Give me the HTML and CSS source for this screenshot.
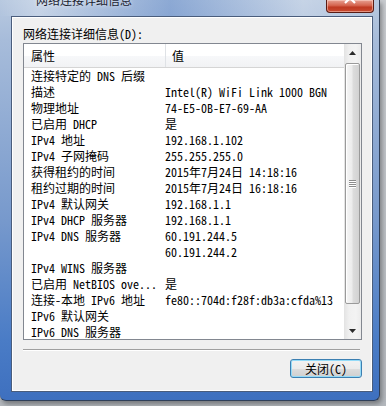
FILE: index.html
```html
<!DOCTYPE html>
<html lang="zh-CN">
<head>
<meta charset="utf-8">
<title>网络连接详细信息</title>
<link rel="stylesheet" href="styles.css">
</head>
<body>
<div class="window">
  <div class="titlebar">
    <span class="title">网络连接详细信息</span>
    <span class="close"><svg width="12" height="10" viewBox="0 0 12 10"><path d="M1 -4 L6 1 L11 -4 M1 6 L6 1 L11 6" stroke="#fff" stroke-width="2.2" fill="none"/></svg></span>
  </div>
  <div class="client">
    <div class="label">网络连接详细信息(<u>D</u>):</div>
    <div class="list">
      <div class="data">
        <div class="header">
          <div class="hcell h1">属性</div>
          <div class="hcell h2">值</div>
        </div>
        <div class="rows">
          <div class="row"><span class="k">连接特定的 DNS 后缀</span><span class="v"></span></div>
          <div class="row"><span class="k">描述</span><span class="v">Intel(R) WiFi Link 1000 BGN</span></div>
          <div class="row"><span class="k">物理地址</span><span class="v">74-E5-0B-E7-69-AA</span></div>
          <div class="row"><span class="k">已启用 DHCP</span><span class="v">是</span></div>
          <div class="row"><span class="k">IPv4 地址</span><span class="v">192.168.1.102</span></div>
          <div class="row"><span class="k">IPv4 子网掩码</span><span class="v">255.255.255.0</span></div>
          <div class="row"><span class="k">获得租约的时间</span><span class="v">2015年7月24日 14:18:16</span></div>
          <div class="row"><span class="k">租约过期的时间</span><span class="v">2015年7月24日 16:18:16</span></div>
          <div class="row"><span class="k">IPv4 默认网关</span><span class="v">192.168.1.1</span></div>
          <div class="row"><span class="k">IPv4 DHCP 服务器</span><span class="v">192.168.1.1</span></div>
          <div class="row"><span class="k">IPv4 DNS 服务器</span><span class="v">60.191.244.5</span></div>
          <div class="row"><span class="k"></span><span class="v">60.191.244.2</span></div>
          <div class="row"><span class="k">IPv4 WINS 服务器</span><span class="v"></span></div>
          <div class="row"><span class="k">已启用 NetBIOS ove...</span><span class="v">是</span></div>
          <div class="row"><span class="k">连接-本地 IPv6 地址</span><span class="v">fe80::704d:f28f:db3a:cfda%13</span></div>
          <div class="row"><span class="k">IPv6 默认网关</span><span class="v"></span></div>
          <div class="row"><span class="k">IPv6 DNS 服务器</span><span class="v"></span></div>
        </div>
      </div>
      <div class="scrollbar">
        <div class="sbtn"><svg width="7" height="4" viewBox="0 0 7 4"><path d="M0 4 L3.5 0 L7 4 Z" fill="#2b2b2b"/></svg></div>
        <div class="track">
          <div class="thumb">
            <span class="grip"></span><span class="grip"></span><span class="grip"></span><span class="grip"></span>
          </div>
        </div>
        <div class="sbtn"><svg width="7" height="4" viewBox="0 0 7 4"><path d="M0 0 L7 0 L3.5 4 Z" fill="#2b2b2b"/></svg></div>
      </div>
    </div>
    <div class="sep"></div>
    <div class="footer">
      <button class="btn">关闭(<u>C</u>)</button>
    </div>
  </div>
</div>
</body>
</html>
```
FILE: styles.css
```css
html, body {
  margin: 0;
  padding: 0;
}
body {
  width: 386px;
  height: 406px;
  overflow: hidden;
  background: linear-gradient(180deg, #c9ccd0 0%, #b4b8bd 100%);
  font-family: "Noto Sans Mono CJK SC", "Noto Sans CJK SC", "Liberation Mono", monospace;
  font-size: 12px;
  color: #000;
}
u { text-decoration: none; }

.window {
  width: 380px;
  height: 401px;
  box-sizing: border-box;
  padding: 0 7px 8px 11px;
  border: 1px solid #2f3f58;
  border-top: none;
  border-left: none;
  border-radius: 0 0 6px 6px;
  background:
    linear-gradient(90deg, rgba(255,255,255,0.0) 0%, rgba(255,255,255,0.25) 10%, rgba(60,110,190,0.35) 45%, rgba(255,255,255,0.2) 80%, rgba(255,255,255,0) 100%) top / 100% 16px no-repeat,
    linear-gradient(180deg, #b8c9e0 0%, #a7bcda 10%, #7799cc 55%, #4a7cc6 85%, #3e70bf 100%);
  box-shadow: 2px 3px 5px rgba(0,0,0,0.35);
  display: flex;
  flex-direction: column;
}

.titlebar {
  height: 16px;
  display: flex;
  align-items: flex-start;
  margin-left: -11px;
  margin-right: -7px;
  overflow: hidden;
}
.title {
  margin: -6px 0 0 36px;
  line-height: 12px;
  color: #1a2230;
  text-shadow: 0 0 4px rgba(255,255,255,0.8);
}
.close {
  margin-left: auto;
  margin-right: 5px;
  width: 48px;
  height: 13px;
  box-sizing: border-box;
  border: 1px solid #5a1c14;
  border-top: none;
  border-radius: 0 0 4px 4px;
  background: linear-gradient(180deg, #e7a293 0%, #d5654f 45%, #bf3a22 60%, #c94a30 100%);
  box-shadow: inset 0 0 0 1px rgba(255,220,210,0.5);
  display: flex;
  justify-content: center;
  align-items: flex-start;
}
.close svg { display: block; margin-top: -3px; }

.client {
  width: 362px;
  height: 376px;
  box-sizing: border-box;
  border: 1px solid #4a5d7c;
  box-shadow: inset 1px 1px 0 #ffffff, inset -1px -1px 0 #ffffff;
  background: #f0f0f0;
  padding: 9px 10px 0 11px;
  display: flex;
  flex-direction: column;
}

.label {
  height: 16px;
  line-height: 16px;
  white-space: nowrap;
}

.list {
  margin-top: 1px;
  width: 339px;
  height: 297px;
  box-sizing: border-box;
  border: 1px solid #828790;
  background: #fff;
  display: flex;
}

.data {
  flex: 1;
  height: 295px;
  overflow: hidden;
  display: flex;
  flex-direction: column;
}
.header {
  height: 24px;
  flex: none;
  box-sizing: border-box;
  display: flex;
  background: linear-gradient(180deg, #ffffff 0%, #ffffff 50%, #f7f8fa 51%, #f1f2f4 100%);
  border-bottom: 1px solid #d5d5d5;
}
.hcell {
  line-height: 23px;
  white-space: nowrap;
}
.h1 {
  width: 134px;
  padding-left: 7px;
  border-right: 1px solid #dfe2e6;
}
.h2 {
  padding-left: 6px;
}

.rows {
  display: flex;
  flex-direction: column;
}
.row {
  height: 16px;
  flex: none;
  display: grid;
  grid-template-columns: 141px 1fr;
  line-height: 16px;
  white-space: nowrap;
}
.k {
  padding-left: 7px;
  overflow: hidden;
}
.v {
  overflow: hidden;
}

.scrollbar {
  width: 17px;
  height: 295px;
  flex: none;
  display: flex;
  flex-direction: column;
  background: linear-gradient(90deg, #e3e3e3 0%, #f0f0f0 30%, #f3f3f3 70%, #ebebeb 100%);
}
.sbtn {
  height: 17px;
  flex: none;
  display: flex;
  align-items: center;
  justify-content: center;
}
.sbtn svg { display: block; }
.track {
  flex: 1;
  padding: 2px 1px 0 1px;
  display: flex;
  flex-direction: column;
}
.thumb {
  height: 241px;
  box-sizing: border-box;
  border: 1px solid #9a9a9a;
  border-radius: 2px;
  background: linear-gradient(90deg, #f6f6f6 0%, #ececec 45%, #dcdcdc 55%, #d2d2d2 100%);
  box-shadow: inset 1px 1px 0 #ffffff;
  display: flex;
  flex-direction: column;
  align-items: center;
  justify-content: center;
  gap: 1px;
}
.grip {
  width: 7px;
  height: 1px;
  background: #8c8c8c;
  box-shadow: 0 1px 0 #ffffff;
}

.sep {
  margin-top: 9px;
  width: 337px;
  height: 0;
  border-top: 1px solid #a0a0a0;
  border-bottom: 1px solid #ffffff;
}

.footer {
  margin-top: 8px;
  display: flex;
  justify-content: flex-end;
  padding-right: 0;
}
.btn {
  width: 72px;
  height: 19px;
  box-sizing: border-box;
  padding: 0;
  border: 1px solid #3c7fb1;
  border-radius: 3px;
  background: linear-gradient(180deg, #f2f2f2 0%, #ebebeb 50%, #dddddd 51%, #cfcfcf 100%);
  box-shadow: inset 0 0 0 1px #94dbf8;
  font-family: "Noto Sans Mono CJK SC", "Noto Sans CJK SC", "Liberation Mono", monospace;
  font-size: 12px;
  line-height: 17px;
  color: #000;
}
```
